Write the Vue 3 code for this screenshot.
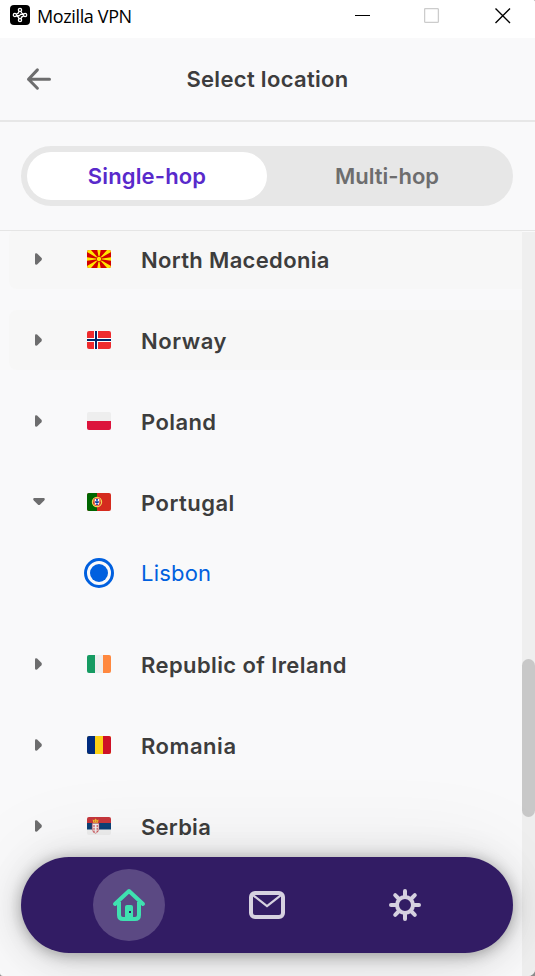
<script setup>
import { ref } from 'vue'

const mode = ref('single')
const openCountry = ref('pt')
const selectedCity = ref('Lisbon')

const countries = [
  { code: 'mk', name: 'North Macedonia', shaded: true, cities: [] },
  { code: 'no', name: 'Norway', shaded: true, cities: [] },
  { code: 'pl', name: 'Poland', cities: [] },
  { code: 'pt', name: 'Portugal', cities: ['Lisbon'] },
  { code: 'ie', name: 'Republic of Ireland', cities: [] },
  { code: 'ro', name: 'Romania', cities: [] },
  { code: 'rs', name: 'Serbia', cities: [] }
]

function toggle(code) {
  openCountry.value = openCountry.value === code ? '' : code
}
</script>

<template>
  <div class="window">
    <header class="titlebar">
      <svg class="app-icon" viewBox="0 0 20 20">
        <rect width="20" height="20" rx="4" fill="#000" />
        <g fill="none" stroke="#fff" stroke-width="1.3">
          <circle cx="10" cy="4.9" r="1.6" />
          <circle cx="4.9" cy="10" r="1.6" />
          <circle cx="15.1" cy="10" r="1.6" />
          <circle cx="10" cy="15.1" r="1.6" />
          <path d="M6.5 10.6H10.3M9.7 9.4H13.5M9 6.3Q8.6 8.6 6.4 9M11 6.3Q11.2 8.4 13.5 9.2M11 13.7Q11.4 11.4 13.6 11M9 13.7Q8.8 11.6 6.5 10.8" />
        </g>
      </svg>
      <span class="app-name">Mozilla VPN</span>
      <div class="controls">
        <svg viewBox="0 0 16 16"><path d="M0 7.5H15" stroke="#000" /></svg>
        <svg viewBox="0 0 16 16"><rect x=".6" y=".6" width="13.8" height="13.8" rx="1" fill="none" stroke="#ccc" stroke-width="1.3" /></svg>
        <svg viewBox="0 0 16 16"><path d="M.5 .5L15 15M15 .5L.5 15" stroke="#000" stroke-width="1.4" /></svg>
      </div>
    </header>

    <div class="heading">
      <svg class="back" viewBox="0 0 26 24">
        <path d="M11.4 2.9L2.5 12.3L11.4 21.2M2.5 12.3H23.5" fill="none" stroke="#6d6d6e" stroke-width="3" stroke-linecap="round" stroke-linejoin="round" />
      </svg>
      <h1>Select location</h1>
    </div>

    <div class="tabs-area">
      <div class="tabs">
        <button class="tab single" :class="{ active: mode === 'single' }" @click="mode = 'single'">Single-hop</button>
        <button class="tab multi" :class="{ active: mode === 'multi' }" @click="mode = 'multi'">Multi-hop</button>
      </div>
    </div>

    <main class="body">
      <div class="list">
        <section v-for="c in countries" :key="c.code" class="country">
          <div class="row" :class="{ shaded: c.shaded }" @click="toggle(c.code)">
            <svg class="arrow" :class="{ open: openCountry === c.code }" viewBox="0 0 12 12">
              <path d="M2 1.4Q2 0 3.4 .3L4.4 .8L8.4 4.8Q9.5 6 8.4 7.2L4.4 11.2L3.4 11.7Q2 12 2 10.6Z" fill="#6d6d6e" />
            </svg>
            <svg class="flag" viewBox="0 0 24 18" preserveAspectRatio="none">
              <g v-if="c.code === 'mk'">
                <rect width="24" height="18" fill="#d20000" />
                <path d="M0 0H4L12 9L0 2ZM24 0H20L12 9L24 2ZM0 18H4L12 9L0 16ZM24 18H20L12 9L24 16ZM10.3 0H13.7L12 9ZM10.3 18H13.7L12 9ZM0 7.3V10.7L12 9ZM24 7.3V10.7L12 9Z" fill="#ffe600" />
                <circle cx="12" cy="9" r="2.7" fill="#ffe600" stroke="#d20000" stroke-width=".8" />
              </g>
              <g v-else-if="c.code === 'no'">
                <rect width="24" height="18" fill="#ef2b2d" />
                <path d="M9 0V18M0 9H24" stroke="#fff" stroke-width="4" />
                <path d="M9 0V18M0 9H24" stroke="#002868" stroke-width="2" />
              </g>
              <g v-else-if="c.code === 'pl'">
                <rect width="24" height="9" fill="#eee" />
                <rect y="9" width="24" height="9" fill="#dc143c" />
              </g>
              <g v-else-if="c.code === 'pt'">
                <rect width="24" height="18" fill="#d52b1e" />
                <rect width="10" height="18" fill="#060" />
                <circle cx="10" cy="9" r="4.6" fill="#d52b1e" stroke="#f5d657" stroke-width="1.2" />
                <path d="M5.5 8H14.5M6.5 12.5L13.5 5.5" stroke="#f5d657" stroke-width=".7" />
                <path d="M7.4 5.4H12.6V10Q12.5 12.4 10 12.8Q7.5 12.4 7.4 10Z" fill="#fff" stroke="#d52b1e" stroke-width=".5" />
                <path d="M10 6V12.4M8 9H12" stroke="#039" stroke-width="1.7" stroke-dasharray="1.7 .5" />
              </g>
              <g v-else-if="c.code === 'ie'">
                <rect width="24" height="18" fill="#eee" />
                <rect width="8" height="18" fill="#169b62" />
                <rect x="16" width="8" height="18" fill="#ff883e" />
              </g>
              <g v-else-if="c.code === 'ro'">
                <rect width="24" height="18" fill="#fcd116" />
                <rect width="8" height="18" fill="#002b7f" />
                <rect x="16" width="8" height="18" fill="#ce1126" />
              </g>
              <g v-else>
                <rect width="24" height="18" fill="#eee" />
                <rect width="24" height="6" fill="#c6363c" />
                <rect y="6" width="24" height="6.5" fill="#0c4076" />
                <path d="M5.2 6.3H12V12Q11.5 15.5 8.5 16.3Q5.5 15.5 5.2 12Z" fill="#eee" stroke="#c6363c" stroke-width=".5" />
                <path d="M7 8V15.5M10.2 8V15" stroke="#c6363c" stroke-width="1" stroke-dasharray="2 .8" />
                <path d="M5.6 2.5L7.2 3.3L8.6 1.6L10 3.3L11.6 2.5L11 5.8H6.2Z" fill="#edb92e" />
                <path d="M7 4.2H8M9.2 4.2H10.2" stroke="#c6363c" stroke-width=".8" />
              </g>
            </svg>
            <span class="name" :class="c.code">{{ c.name }}</span>
          </div>
          <div v-if="openCountry === c.code" class="cities">
            <div v-for="city in c.cities" :key="city" class="city" @click="selectedCity = city">
              <span class="radio" :class="{ checked: selectedCity === city }"></span>
              <span class="city-name">{{ city }}</span>
            </div>
          </div>
        </section>
      </div>
      <div class="track"><div class="thumb"></div></div>
    </main>

    <nav class="navbar">
      <button class="nav-item active">
        <svg class="i36" viewBox="0 0 36 36">
          <path d="M4 17L18 4L32 17" fill="none" stroke="#3fe1b0" stroke-width="4" stroke-linecap="round" stroke-linejoin="round" />
          <path d="M8 15V28Q8 32 12 32H24Q28 32 28 28V15" fill="none" stroke="#3fe1b0" stroke-width="4" />
          <path d="M14 32V20Q14 18 16 18H20Q22 18 22 20V32Z" fill="#3fe1b0" />
          <rect x="18" y="24" width="2" height="2" fill="#321c64" />
        </svg>
      </button>
      <button class="nav-item">
        <svg class="i36" viewBox="0 0 36 36">
          <rect x="2" y="6" width="32" height="24" rx="4" fill="none" stroke="#d6d1e0" stroke-width="4" />
          <path d="M4 8.2L18 19L32 8.2" fill="none" stroke="#d6d1e0" stroke-width="2.2" />
        </svg>
      </button>
      <button class="nav-item">
        <svg class="i36" viewBox="0 0 36 36">
          <g fill="none" stroke="#d6d1e0" stroke-width="4" stroke-linecap="round">
            <circle cx="18" cy="18" r="8" />
            <path d="M18 4V9M18 27V32M4 18H9M27 18H32M8.2 8.2L11.5 11.5M24.5 24.5L27.8 27.8M27.8 8.2L24.5 11.5M11.5 24.5L8.2 27.8" />
          </g>
        </svg>
      </button>
    </nav>
  </div>
</template>

<style>
body {
  background: #8a8a8a;
  overflow: hidden;
}
</style>

<style scoped>
.window {
  position: relative;
  display: flex;
  flex-direction: column;
  height: 976px;
  overflow: hidden;
  background: #f9f9fa;
  border-radius: 0 2px 7px 3px;
  font-family: Inter, sans-serif;
  color: #3d3d3d;
}
button {
  border: 0;
  padding: 0;
  background: none;
  font: inherit;
}
svg {
  display: block;
}
.titlebar {
  display: flex;
  align-items: flex-start;
  flex: none;
  height: 38px;
  box-sizing: border-box;
  padding: 5px 24px 0 10px;
  background: #fff;
}
.app-icon {
  width: 20px;
  height: 20px;
}
.app-name {
  margin: -1px 0 0 7px;
  font: 18px/24px "Open Sans", sans-serif;
  letter-spacing: -0.37px;
  color: #000;
}
.controls {
  display: flex;
  gap: 54px;
  margin-left: auto;
  padding-top: 3px;
}
.controls svg {
  width: 16px;
  height: 16px;
}
.controls svg:nth-child(2) {
  margin: 0 1px 0 -1px;
}
.heading {
  display: grid;
  grid-template-columns: 26px 1fr 26px;
  align-items: center;
  flex: none;
  height: 84px;
  box-sizing: border-box;
  padding: 0 26px;
  border-bottom: 2px solid #e7e7e7;
}
.back {
  width: 26px;
  height: 24px;
}
h1 {
  margin: 0;
  text-align: center;
  font-size: 22px;
  line-height: 30px;
  font-weight: 600;
  letter-spacing: 0.32px;
}
.tabs-area {
  flex: none;
  height: 109px;
  box-sizing: border-box;
  padding: 24px 22px 0 21px;
  border-bottom: 1px solid #e5e5e5;
}
.tabs {
  display: grid;
  grid-template-columns: 240px 240px;
  height: 60px;
  box-sizing: border-box;
  padding: 6px;
  border-radius: 30px;
  background: #e7e7e7;
}
.tab {
  height: 48px;
  border-radius: 24px;
  font-size: 22px;
  font-weight: 600;
  color: #6d6d6e;
}
.tab.single {
  letter-spacing: 0.15px;
}
.tab.active {
  background: #fff;
  color: #592acb;
}
.body {
  display: flex;
  flex: 1;
  min-height: 0;
}
.list {
  flex: 1;
  overflow: hidden;
  padding-left: 9px;
}
.country {
  margin-bottom: 21px;
}
.country:first-child {
  margin-top: -2px;
}
.row {
  display: flex;
  align-items: center;
  height: 60px;
  padding-left: 24px;
  border-radius: 8px 0 0 8px;
}
.row.shaded {
  background: #f7f7f7;
}
.arrow {
  width: 12px;
  height: 12px;
}
.arrow.open {
  transform: rotate(90deg);
}
.flag {
  width: 24px;
  height: 18px;
  margin-left: 42px;
  border-radius: 2px;
}
.name {
  margin: 2px 0 0 30px;
  font-size: 22px;
  line-height: 30px;
  font-weight: 600;
  letter-spacing: 0.4px;
}
.name.mk {
  letter-spacing: 0.33px;
}
.name.no {
  letter-spacing: 0.55px;
}
.name.pt {
  letter-spacing: 0.48px;
}
.name.ro {
  letter-spacing: 0.55px;
}
.name.rs {
  letter-spacing: 0.25px;
}
.city {
  display: flex;
  align-items: center;
  height: 30px;
  padding: 26px 0 25px 75px;
}
.radio {
  display: grid;
  place-items: center;
  width: 30px;
  height: 30px;
  box-sizing: border-box;
  border: 3px solid #0060df;
  border-radius: 50%;
}
.radio.checked::after {
  content: "";
  width: 18px;
  height: 18px;
  border-radius: 50%;
  background: #0060df;
}
.city-name {
  margin-left: 27px;
  font-size: 22px;
  line-height: 30px;
  letter-spacing: 0.2px;
  color: #0060df;
}
.track {
  width: 13px;
  margin-top: 1px;
  padding-top: 427px;
  background: #efefef;
}
.thumb {
  height: 158px;
  border-radius: 7px;
  background: #c8c8c8;
}
.navbar {
  position: absolute;
  left: 21px;
  bottom: 23px;
  display: flex;
  gap: 66px;
  width: 492px;
  height: 96px;
  box-sizing: border-box;
  padding: 12px 72px;
  border-radius: 48px;
  background: #321c64;
  box-shadow: 0 2px 14px rgba(12, 12, 13, 0.3), 0 4px 36px rgba(12, 12, 13, 0.16), 0 0 96px rgba(12, 12, 13, 0.08);
}
.nav-item {
  display: grid;
  place-items: center;
  width: 72px;
  height: 72px;
  border-radius: 50%;
}
.nav-item.active {
  background: #5b4983;
}
.i36 {
  width: 36px;
  height: 36px;
}
</style>
